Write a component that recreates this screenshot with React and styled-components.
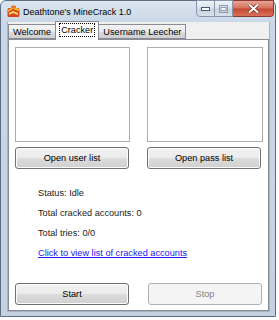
import styled, { createGlobalStyle } from 'styled-components'
import React, { useState } from 'react'

const GlobalStyle = createGlobalStyle`
  html, body {
    margin: 0;
    padding: 0;
    background: #ffffff;
  }
  * {
    box-sizing: border-box;
  }
`

// the window frame, Win7 basic look
const Window = styled.div`
  width: 276px;
  height: 317px;
  display: flex;
  flex-direction: column;
  border: 1px solid #5d6e84;
  border-radius: 6px 6px 0 0;
  background: linear-gradient(to bottom, #dbe5f0 0px, #c9d7e6 22px, #c3d1e1 100%);
  font-family: "Liberation Sans", Arial, sans-serif;
`

const TitleBar = styled.div`
  height: 21px;
  display: flex;
  align-items: flex-start;
  padding-left: 6px;
`

const TitleIcon = styled.div`
  width: 13px;
  height: 13px;
  margin-top: 4px;
  display: flex;
`

const TitleText = styled.div`
  font-size: 9px;
  color: #000;
  margin-left: 3px;
  margin-top: 5px;
  line-height: 12px;
`

const CaptionGroup = styled.div`
  margin-left: auto;
  margin-right: 1px;
  margin-top: -1px;
  display: flex;
  height: 17px;
`

const CaptionButton = styled.div`
  width: ${props => props.w}px;
  height: 17px;
  display: flex;
  align-items: center;
  justify-content: center;
  border: 1px solid ${props => props.close ? '#8a3a33' : '#8896a8'};
  border-left: ${props => props.first ? '1px solid #8896a8' : 'none'};
  border-radius: ${props => props.first ? '0 0 0 4px' : props.close ? '0 0 4px 0' : '0'};
  background: ${props => props.close
    ? 'linear-gradient(to bottom, #e8a495 0%, #d6735f 45%, #c44a33 55%, #d9705a 100%)'
    : 'linear-gradient(to bottom, #eef3f8 0%, #dbe4ee 45%, #c8d4e2 55%, #d6e0ec 100%)'};
`

const Client = styled.div`
  flex: 1;
  margin: 0 5px 4px 6px;
  background: #f0f0f0;
  border: 1px solid #a3b2c4;
  border-top: none;
  display: flex;
  flex-direction: column;
`

const TabStrip = styled.div`
  height: 17px;
  display: flex;
  align-items: flex-end;
  position: relative;
  z-index: 1;
`

const Tab = styled.div`
  height: ${props => props.active ? 19 : 15}px;
  margin-bottom: ${props => props.active ? -1 : 0}px;
  padding: 0 ${props => props.active ? 3 : 4}px;
  display: flex;
  align-items: center;
  font-size: 9.2px;
  color: #000;
  border: 1px solid #898c95;
  border-bottom: ${props => props.active ? 'none' : '1px solid #898c95'};
  border-left: ${props => props.active || props.first ? '1px solid #898c95' : 'none'};
  border-right: ${props => props.beforeActive ? 'none' : '1px solid #898c95'};
  background: ${props => props.active
    ? '#ffffff'
    : 'linear-gradient(to bottom, #f3f3f3 0%, #ebebeb 50%, #dddddd 51%, #cfcfcf 100%)'};
`

const FocusText = styled.span`
  border: 1px dotted #000;
  padding: 0 1px;
  line-height: 12px;
  margin-top: -2px;
`

const TabPage = styled.div`
  flex: 1;
  background: #fff;
  border: 1px solid #898c95;
  padding: 7px 6px 5px 6px;
  display: flex;
  flex-direction: column;
`

const ListGrid = styled.div`
  display: grid;
  grid-template-columns: 115px 116px;
  column-gap: 17px;
  row-gap: 5px;
`

const ListBox = styled.div`
  height: 95px;
  background: #fff;
  border: 1px solid #abadb3;
`

const Button = styled.div`
  width: 114px;
  height: 22px;
  display: flex;
  align-items: center;
  justify-content: center;
  font-size: 9.2px;
  border-radius: 3px;
  color: ${props => props.disabled ? '#838383' : '#000'};
  border: 1px solid ${props => props.disabled ? '#adb2b5' : '#707070'};
  box-shadow: ${props => props.disabled ? 'none' : 'inset 0 0 0 1px #fcfcfc'};
  background: ${props => props.disabled
    ? '#f4f4f4'
    : 'linear-gradient(to bottom, #f2f2f2 0%, #ebebeb 50%, #dddddd 51%, #cfcfcf 100%)'};
`

const Info = styled.div`
  display: flex;
  flex-direction: column;
  gap: 9px;
  padding-left: 23px;
  margin-top: 19px;
`

const InfoLabel = styled.div`
  font-size: 9.2px;
  line-height: 11px;
  color: #222;
`

const LinkLabel = styled.a`
  font-size: 9.2px;
  line-height: 11px;
  color: #2020ee;
  text-decoration: underline;
  cursor: pointer;
`

const BottomRow = styled.div`
  margin-top: auto;
  display: flex;
  gap: 19px;
`

function AppIcon() {
  return (
    <svg width="13" height="13" viewBox="0 0 13 13">
      <rect x="0.5" y="3" width="12" height="9" rx="1.5" fill="#d9461c" />
      <path d="M1 5 L6 2 L12 4 L12 6 L6 4 L1 7 Z" fill="#f6c22a" />
      <path d="M2 8 L6 6 L11 8 L11 10 L6 8 L2 10 Z" fill="#fbe06a" />
      <rect x="4" y="0.5" width="5" height="3" rx="1" fill="#e8772a" />
    </svg>
  )
}

function App() {
  const [tab, setTab] = useState(1)
  const tabs = ['Welcome', 'Cracker', 'Username Leecher']

  return (
    <>
      <GlobalStyle />
      <Window>
        <TitleBar>
          <TitleIcon><AppIcon /></TitleIcon>
          <TitleText>Deathtone's MineCrack 1.0</TitleText>
          <CaptionGroup>
            <CaptionButton w={19} first>
              <svg width="9" height="4" viewBox="0 0 9 4">
                <rect x="0.5" y="0.5" width="8" height="3" fill="#fff" stroke="#4a5a70" strokeWidth="1" />
              </svg>
            </CaptionButton>
            <CaptionButton w={18}>
              <svg width="9" height="8" viewBox="0 0 9 8">
                <rect x="0.5" y="0.5" width="8" height="7" fill="none" stroke="#8c9bb0" strokeWidth="1" />
                <rect x="2" y="2.5" width="5" height="3" fill="#fff" stroke="#8c9bb0" strokeWidth="1" />
              </svg>
            </CaptionButton>
            <CaptionButton w={41} close>
              <svg width="11" height="9" viewBox="0 0 11 9">
                <path d="M1 0.5 L5.5 4.5 L10 0.5 M1 8.5 L5.5 4.5 L10 8.5" stroke="#6b2a22" strokeWidth="3.2" fill="none" />
                <path d="M1 0.5 L5.5 4.5 L10 0.5 M1 8.5 L5.5 4.5 L10 8.5" stroke="#fff" strokeWidth="2" fill="none" />
              </svg>
            </CaptionButton>
          </CaptionGroup>
        </TitleBar>
        <Client>
          <TabStrip>
            {tabs.map((t, i) => (
              <Tab
                key={t}
                active={i === tab}
                first={i === 0}
                beforeActive={i === tab - 1}
                onClick={() => setTab(i)}
              >
                {i === tab ? <FocusText>{t}</FocusText> : t}
              </Tab>
            ))}
          </TabStrip>
          <TabPage>
            <ListGrid>
              <ListBox />
              <ListBox />
              <Button>Open user list</Button>
              <Button>Open pass list</Button>
            </ListGrid>
            <Info>
              <InfoLabel>Status: Idle</InfoLabel>
              <InfoLabel>Total cracked accounts: 0</InfoLabel>
              <InfoLabel>Total tries: 0/0</InfoLabel>
              <LinkLabel>Click to view list of cracked accounts</LinkLabel>
            </Info>
            <BottomRow>
              <Button>Start</Button>
              <Button disabled>Stop</Button>
            </BottomRow>
          </TabPage>
        </Client>
      </Window>
    </>
  )
}

export default App
